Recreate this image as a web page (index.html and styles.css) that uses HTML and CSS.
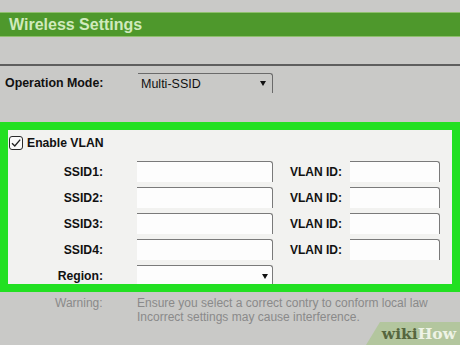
FILE: index.html
```html
<!DOCTYPE html>
<html lang="en">
<head>
    <meta charset="UTF-8">
    <title>Wireless Settings</title>
    <link rel="stylesheet" href="styles.css">
</head>
<body>
    <div class="title-bar">Wireless Settings</div>
    <div class="divider"></div>

    <div class="mode-row">
        <span class="mode-label">Operation Mode:</span>
        <div class="select mode-select">
            <span>Multi-SSID</span>
            <span class="arrow"></span>
        </div>
    </div>

    <div class="vlan-box">
        <div class="enable-row">
            <span class="checkbox">
                <svg width="12" height="12" viewBox="0 0 12 12"><path d="M2 6.2 L4.8 9 L10.2 2.6" fill="none" stroke="#222" stroke-width="1.4"/></svg>
            </span>
            <span class="enable-label">Enable VLAN</span>
        </div>

        <div class="field-row">
            <span class="label">SSID1:</span>
            <div class="input ssid"></div>
            <span class="vlan-label">VLAN ID:</span>
            <div class="input vlan"></div>
        </div>
        <div class="field-row">
            <span class="label">SSID2:</span>
            <div class="input ssid"></div>
            <span class="vlan-label">VLAN ID:</span>
            <div class="input vlan"></div>
        </div>
        <div class="field-row">
            <span class="label">SSID3:</span>
            <div class="input ssid"></div>
            <span class="vlan-label">VLAN ID:</span>
            <div class="input vlan"></div>
        </div>
        <div class="field-row">
            <span class="label">SSID4:</span>
            <div class="input ssid"></div>
            <span class="vlan-label">VLAN ID:</span>
            <div class="input vlan"></div>
        </div>
        <div class="field-row">
            <span class="label">Region:</span>
            <div class="input ssid region">
                <span class="arrow"></span>
            </div>
        </div>
    </div>

    <div class="warning">
        <span class="warning-label">Warning:</span>
        <div class="warning-text">
            <div>Ensure you select a correct contry to conform local law</div>
            <div>Incorrect settings may cause interference.</div>
        </div>
    </div>

    <div class="watermark"><span class="wiki">wiki</span><span class="how">How</span></div>
</body>
</html>
```

FILE: styles.css
```css
body {
    margin: 0;
    width: 460px;
    height: 345px;
    overflow: hidden;
    position: relative;
    background: #c9c9c7;
    font-family: "Liberation Sans", Arial, sans-serif;
    font-size: 12px;
    color: #111;
}
.title-bar {
    margin-top: 12px;
    height: 23px;
    line-height: 23px;
    padding-left: 9px;
    background: #4e982c;
    border-top: 1px solid #8fbf6e;
    border-bottom: 1px solid #8fbf6e;
    color: #d0eabd;
    font-size: 16px;
    font-weight: bold;
}
.divider {
    margin-top: 27px;
    height: 2px;
    background: #5e5e5e;
}
.mode-row {
    display: flex;
    align-items: center;
    margin-top: 7px;
    height: 20px;
}
.mode-label {
    width: 133px;
    padding-left: 5px;
    font-size: 12.4px;
    font-weight: bold;
}
.select {
    display: flex;
    align-items: center;
    justify-content: space-between;
    box-sizing: border-box;
    border-top: 1px solid #6a6a6a;
    border-right: 1px solid #6a6a6a;
    border-top-right-radius: 3px;
}
.mode-select {
    width: 135px;
    height: 20px;
    padding: 0 6px 0 3px;
    font-size: 12.5px;
}
.arrow {
    width: 0;
    height: 0;
    border-left: 3.5px solid transparent;
    border-right: 3.5px solid transparent;
    border-top: 5px solid #111;
}
.vlan-box {
    margin-top: 29px;
    box-sizing: border-box;
    height: 170px;
    border: 8px solid #22e022;
    background: #f2f2f0;
    overflow: hidden;
}
.enable-row {
    display: flex;
    align-items: center;
    margin-top: 6px;
    height: 14px;
}
.checkbox {
    display: flex;
    align-items: center;
    justify-content: center;
    box-sizing: border-box;
    width: 14px;
    height: 14px;
    margin-left: 1px;
    border: 1.5px solid #2a2a2a;
    border-radius: 3px;
    background: #fafafa;
}
.enable-label {
    margin-left: 4px;
    font-size: 12.2px;
    font-weight: bold;
}
.field-row {
    display: flex;
    align-items: center;
    margin-top: 5px;
    height: 21px;
}
.enable-row + .field-row {
    margin-top: 11px;
}
.label {
    width: 95px;
    margin-right: 34px;
    text-align: right;
    font-size: 12.2px;
    font-weight: bold;
}
.vlan-label {
    width: 60px;
    margin-left: 17px;
    font-weight: bold;
}
.input {
    box-sizing: border-box;
    height: 21px;
    background: #fdfdfd;
    border-top: 1px solid #7a7a7a;
    border-right: 1px solid #7a7a7a;
    border-top-right-radius: 3px;
}
.ssid {
    width: 136px;
}
.vlan {
    width: 90px;
}
.region {
    display: flex;
    align-items: center;
    justify-content: flex-end;
    padding-right: 4px;
}
.warning {
    display: flex;
    margin-top: 5px;
    color: #8a8a8a;
    line-height: 13.5px;
}
.warning-label {
    width: 82px;
    padding-left: 55px;
}
.watermark {
    position: absolute;
    right: 0;
    bottom: 0;
    width: 80px;
    height: 23px;
    padding-left: 10px;
    padding-right: 4px;
    background: #b3c69e;
    clip-path: polygon(14px 0, 100% 0, 100% 100%, 0 100%);
    font-family: "DejaVu Serif", "Liberation Serif", serif;
    font-weight: bold;
    font-size: 15.5px;
    line-height: 24px;
    text-align: right;
}
.wiki {
    color: #56663f;
}
.how {
    color: #eef3e6;
}
```
